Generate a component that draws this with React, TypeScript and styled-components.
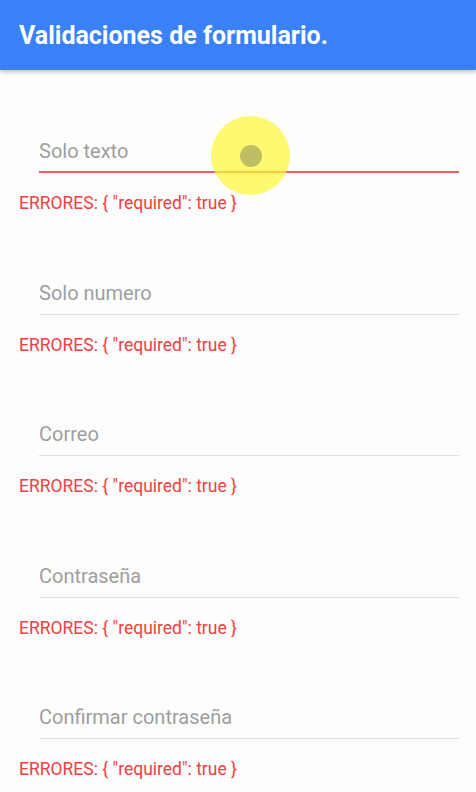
import React from "react";
import styled, { createGlobalStyle } from "styled-components";

const GlobalStyle = createGlobalStyle`
  body {
    margin: 0;
    background: #fdfdfd;
    font-family: Roboto, "Noto Sans", sans-serif;
  }
`;

const Page = styled.div`
  position: relative;
  width: 476px;
  height: 792px;
  background: #fdfdfd;
  overflow: hidden;
`;

const Header = styled.header`
  height: 70px;
  background: #3a80f6;
  display: flex;
  align-items: center;
  padding: 0 19px;
  box-shadow: 0 2px 4px rgba(0, 0, 0, 0.25);
`;

const Title = styled.h1`
  margin: 0;
  color: #fff;
  font-size: 25px;
  font-weight: 700;
`;

const Form = styled.form`
  display: flex;
  flex-direction: column;
  padding-top: 60px;
`;

const Field = styled.div`
  display: flex;
  flex-direction: column;
  margin-bottom: 58.5px;
`;

const Input = styled.input<{ focused?: boolean }>`
  box-sizing: border-box;
  height: 43px;
  margin: 0 17px 0 39px;
  padding: 0;
  border: none;
  border-bottom: ${(p) => (p.focused ? "2px solid #f55a5a" : "1px solid #dedede")};
  background: transparent;
  font-family: Roboto, "Noto Sans", sans-serif;
  font-size: 20px;
  color: #333;
  outline: none;

  &::placeholder {
    color: #9e9e9e;
  }
`;

const Error = styled.div`
  margin: 20px 0 0 19px;
  color: #f04141;
  font-size: 17.5px;
  line-height: 20px;
`;

const Touch = styled.div`
  position: absolute;
  left: 211px;
  top: 116px;
  width: 79px;
  height: 79px;
  border-radius: 50%;
  background: rgba(255, 247, 60, 0.72);
  display: flex;
  align-items: center;
  justify-content: center;
`;

const TouchDot = styled.div`
  width: 22px;
  height: 22px;
  border-radius: 50%;
  background: rgba(150, 150, 90, 0.6);
`;

const fields = [
  "Solo texto",
  "Solo numero",
  "Correo",
  "Contraseña",
  "Confirmar contraseña",
];

export default function App() {
  return (
    <Page>
      <GlobalStyle />
      <Header>
        <Title>Validaciones de formulario.</Title>
      </Header>
      <Form>
        {fields.map((label, i) => (
          <Field key={label}>
            <Input placeholder={label} focused={i === 0} />
            <Error>ERRORES: {'{ "required": true }'}</Error>
          </Field>
        ))}
      </Form>
      <Touch>
        <TouchDot />
      </Touch>
    </Page>
  );
}
